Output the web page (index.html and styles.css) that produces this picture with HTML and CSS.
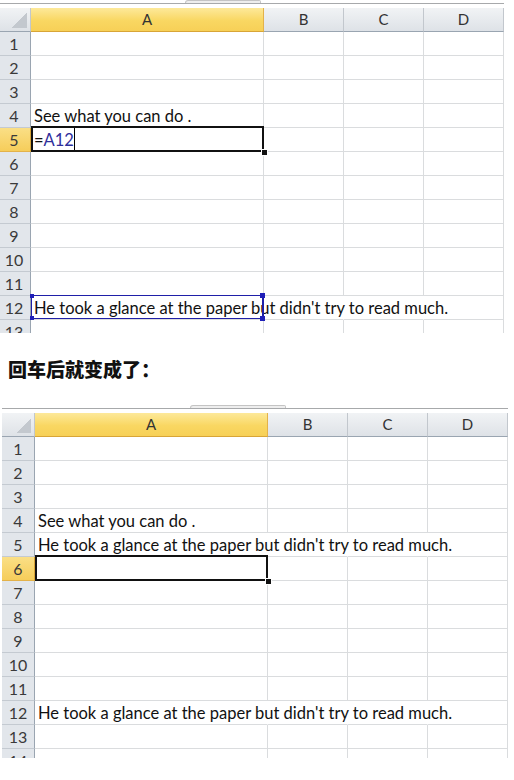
FILE: index.html
```html
<!DOCTYPE html>
<html>
<head>
<meta charset="utf-8">
<link rel="stylesheet" href="styles.css">
</head>
<body>
<div class="sheet sheet-1">
  <div class="tabbar"><span class="tab"></span></div>
  <div class="frame">
    <div class="grid">
      <div class="hd corner"></div><div class="hd sel">A</div><div class="hd">B</div><div class="hd">C</div><div class="hd">D</div>
      <div class="rh">1</div><div class="c"></div><div class="c"></div><div class="c"></div><div class="c"></div>
      <div class="rh">2</div><div class="c"></div><div class="c"></div><div class="c"></div><div class="c"></div>
      <div class="rh">3</div><div class="c"></div><div class="c"></div><div class="c"></div><div class="c"></div>
      <div class="rh">4</div><div class="c a">See what you can do .</div><div class="c"></div><div class="c"></div><div class="c"></div>
      <div class="rh sel">5</div><div class="c a cur"><span>=</span><span class="refname">A12</span><span class="caret"></span></div><div class="c"></div><div class="c"></div><div class="c"></div>
      <div class="rh">6</div><div class="c"></div><div class="c"></div><div class="c"></div><div class="c"></div>
      <div class="rh">7</div><div class="c"></div><div class="c"></div><div class="c"></div><div class="c"></div>
      <div class="rh">8</div><div class="c"></div><div class="c"></div><div class="c"></div><div class="c"></div>
      <div class="rh">9</div><div class="c"></div><div class="c"></div><div class="c"></div><div class="c"></div>
      <div class="rh">10</div><div class="c"></div><div class="c"></div><div class="c"></div><div class="c"></div>
      <div class="rh">11</div><div class="c"></div><div class="c"></div><div class="c"></div><div class="c"></div>
      <div class="rh">12</div><div class="c a over refcell">He took a glance at the paper but didn't try to read much.<span class="ref"><i class="h tl"></i><i class="h bl"></i><i class="h tr"></i><i class="h br"></i></span></div><div class="c over"></div><div class="c over"></div><div class="c"></div>
      <div class="rh">13</div><div class="c"></div><div class="c"></div><div class="c"></div><div class="c"></div>
    </div>
  </div>
</div>

<h2 class="caption">回车后就变成了：</h2>

<div class="sheet sheet-2">
  <div class="tabbar"><span class="tab"></span></div>
  <div class="frame">
    <div class="grid">
      <div class="hd corner"></div><div class="hd sel">A</div><div class="hd">B</div><div class="hd">C</div><div class="hd">D</div>
      <div class="rh">1</div><div class="c"></div><div class="c"></div><div class="c"></div><div class="c"></div>
      <div class="rh">2</div><div class="c"></div><div class="c"></div><div class="c"></div><div class="c"></div>
      <div class="rh">3</div><div class="c"></div><div class="c"></div><div class="c"></div><div class="c"></div>
      <div class="rh">4</div><div class="c a">See what you can do .</div><div class="c"></div><div class="c"></div><div class="c"></div>
      <div class="rh">5</div><div class="c a over">He took a glance at the paper but didn't try to read much.</div><div class="c over"></div><div class="c over"></div><div class="c"></div>
      <div class="rh sel">6</div><div class="c a cur"></div><div class="c"></div><div class="c"></div><div class="c"></div>
      <div class="rh">7</div><div class="c"></div><div class="c"></div><div class="c"></div><div class="c"></div>
      <div class="rh">8</div><div class="c"></div><div class="c"></div><div class="c"></div><div class="c"></div>
      <div class="rh">9</div><div class="c"></div><div class="c"></div><div class="c"></div><div class="c"></div>
      <div class="rh">10</div><div class="c"></div><div class="c"></div><div class="c"></div><div class="c"></div>
      <div class="rh">11</div><div class="c"></div><div class="c"></div><div class="c"></div><div class="c"></div>
      <div class="rh">12</div><div class="c a over">He took a glance at the paper but didn't try to read much.</div><div class="c over"></div><div class="c over"></div><div class="c"></div>
      <div class="rh">13</div><div class="c"></div><div class="c"></div><div class="c"></div><div class="c"></div>
      <div class="rh">14</div><div class="c"></div><div class="c"></div><div class="c"></div><div class="c"></div>
    </div>
  </div>
</div>
</body>
</html>
```

FILE: styles.css
```css
html, body {
  margin: 0;
  background: #fff;
}
body {
  font-family: Lato, "Liberation Sans", sans-serif;
  color: #111;
}
.sheet {
  overflow: hidden;
}
.sheet-1 {
  height: 333px;
  margin-left: -2px;
}
.sheet-2 {
  height: 353px;
  margin-left: 2px;
}
.tabbar {
  height: 3px;
  display: flex;
  align-items: flex-end;
}
.tab {
  height: 3px;
  box-sizing: border-box;
  border: 1px solid #c4c4c4;
  border-bottom: none;
  border-radius: 5px 3px 0 0;
  background: #eeeeee;
}
.sheet-1 .tab {
  margin-left: 187px;
  width: 76px;
}
.sheet-2 .tab {
  margin-left: 188px;
  width: 96px;
}
.frame {
  width: 506px;
  border-top: 1px solid #a7a9ab;
  padding-top: 4px;
}
.grid {
  display: grid;
  grid-template-columns: 33px 233px 80px 80px 80px;
  grid-auto-rows: 24px;
}
.grid > div {
  box-sizing: border-box;
  border-right: 1px solid #dadcde;
  border-bottom: 1px solid #dadcde;
}
.hd {
  background: linear-gradient(#f1f3f5, #dee2e7);
  border-right-color: #c2c7cd !important;
  border-bottom-color: #9aa5b1 !important;
  font-size: 15px;
  line-height: 23px;
  color: #333;
  text-align: center;
}
.hd.sel {
  background: linear-gradient(#fde99a, #f9d762 55%, #f7d057);
  border-right-color: #e3b24a !important;
  border-bottom-color: #d8a537 !important;
}
.corner {
  display: flex;
  justify-content: flex-end;
  align-items: flex-end;
  padding: 0 3px 3px 0;
}
.corner::after {
  content: "";
  width: 15px;
  height: 15px;
  background: linear-gradient(to bottom right, transparent 50%, #c3c8ce 50%);
}
.rh {
  background: #e2e6eb;
  border-right-color: #9aa5b1 !important;
  border-bottom-color: #c4cad1 !important;
  font-size: 16px;
  line-height: 24px;
  color: #3a3a3a;
  text-align: center;
}
.rh.sel {
  background: linear-gradient(#fadf86, #f6cd5a);
  border-right-color: #d8a537 !important;
  border-bottom-color: #e3b24a !important;
}
.c.a {
  padding-left: 3px;
  font-size: 16.5px;
  line-height: 24px;
  white-space: nowrap;
  color: #111;
  position: relative;
}
.c.over {
  border-right-color: transparent !important;
}
.refname {
  color: #2f2f9c;
}
.caret {
  display: inline-block;
  width: 1px;
  height: 24px;
  background: #000;
  vertical-align: top;
  margin-top: -1px;
}
.cur::before {
  content: "";
  position: absolute;
  top: -2px;
  left: 0;
  right: -1px;
  bottom: -1px;
  border: 2px solid #111;
  pointer-events: none;
}
.cur::after {
  content: "";
  position: absolute;
  right: -4px;
  bottom: -4px;
  width: 5px;
  height: 5px;
  background: #111;
  box-shadow: 0 0 0 1px #fff;
}
.ref {
  position: absolute;
  top: -1px;
  left: 0;
  right: -1px;
  bottom: 0;
  border: 1px solid #1f1fa8;
  border-right-width: 2px;
}
.h {
  position: absolute;
  background: #1f1fb8;
  width: 4px;
  height: 4px;
}
.h.tl { left: -2px; top: -2px; }
.h.bl { left: -2px; bottom: -2px; }
.h.tr { right: -3px; top: -3px; width: 5px; height: 5px; }
.h.br { right: -3px; bottom: -3px; width: 5px; height: 5px; }
.caption {
  margin: 0;
  height: 72px;
  padding-left: 8px;
  font-family: "Noto Sans CJK SC", sans-serif;
  font-size: 19px;
  font-weight: 900;
  line-height: 72px;
  color: #111;
}
```
